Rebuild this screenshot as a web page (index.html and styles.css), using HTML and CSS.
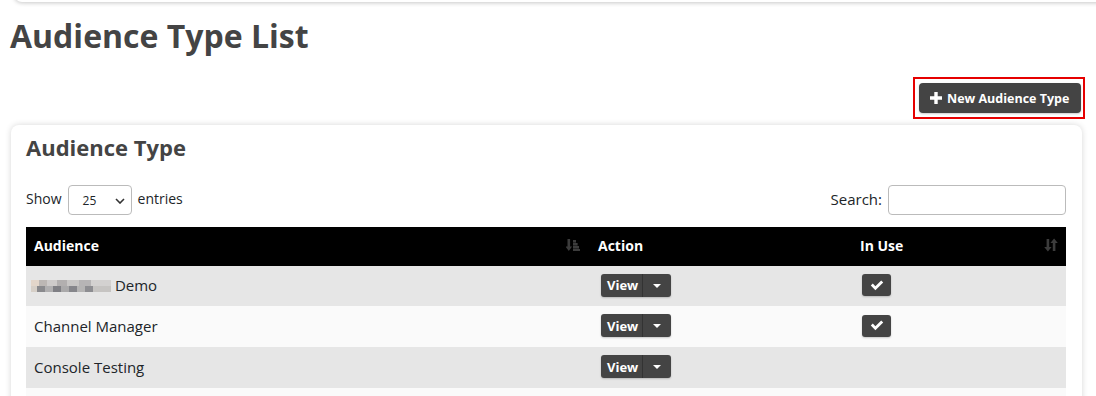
FILE: index.html
```html
<!DOCTYPE html>
<html lang="en">
<head>
<meta charset="UTF-8" />
<meta name="viewport" content="width=device-width, initial-scale=1" />
<title>Audience Type List</title>
<link rel="stylesheet" href="styles.css">
</head>
<body>
  <div class="top-card"></div>

  <div class="page">
    <h1>Audience Type List</h1>

    <div class="toolbar">
      <span class="highlight">
        <button class="btn btn-new" type="button">
          <svg class="plus" viewBox="0 0 12 12" width="12" height="12"><path d="M4.3 0h3.4v4.3H12v3.4H7.7V12H4.3V7.7H0V4.3h4.3z" fill="#fff"/></svg>
          New Audience Type
        </button>
      </span>
    </div>

    <div class="card">
      <h2>Audience Type</h2>

      <div class="table-controls">
        <label class="length">
          Show
          <span class="select">25
            <svg viewBox="0 0 10 6" width="10" height="6"><path d="M1 1l4 4 4-4" fill="none" stroke="#333" stroke-width="1.6"/></svg>
          </span>
          entries
        </label>
        <label class="search">
          Search:
          <span class="input"></span>
        </label>
      </div>

      <table class="list">
        <colgroup>
          <col class="col-audience">
          <col class="col-action">
          <col class="col-use">
        </colgroup>
        <thead>
          <tr>
            <th>
              <span class="th-inner">Audience
                <svg class="sort" viewBox="0 0 14 14" width="14" height="14">
                  <path d="M1.5 1h2.6v7.5h2L2.8 13 -0.5 8.5h2z" fill="#3c3c3c"/>
                  <rect x="7" y="2" width="3" height="2.6" fill="#3c3c3c"/>
                  <rect x="7" y="5" width="4.6" height="2.6" fill="#3c3c3c"/>
                  <rect x="7" y="8" width="6" height="2.6" fill="#3c3c3c"/>
                  <rect x="7" y="11" width="7" height="2" fill="#3c3c3c"/>
                </svg>
              </span>
            </th>
            <th>Action</th>
            <th>
              <span class="th-inner">In Use
                <svg class="sort" viewBox="0 0 14 14" width="14" height="14">
                  <path d="M2.6 1h2.6v8h2.4L3.9 13.5 0.2 9h2.4z" fill="#3c3c3c"/>
                  <path d="M8.8 13h2.6V5h2.4L10.1 0.5 6.4 5h2.4z" fill="#3c3c3c"/>
                </svg>
              </span>
            </th>
          </tr>
        </thead>
        <tbody>
          <tr>
            <td><span class="blurred"></span> Demo</td>
            <td>
              <span class="btn-group">
                <span class="btn-view">View</span><span class="btn-caret"></span>
              </span>
            </td>
            <td>
              <span class="btn-check">
                <svg viewBox="0 0 14 11" width="14" height="11"><path d="M0.8 5.6l2-2 2.6 2.6L11.2 0.4l2 2L5.4 10.2z" fill="#fff"/></svg>
              </span>
            </td>
          </tr>
          <tr>
            <td>Channel Manager</td>
            <td>
              <span class="btn-group">
                <span class="btn-view">View</span><span class="btn-caret"></span>
              </span>
            </td>
            <td>
              <span class="btn-check">
                <svg viewBox="0 0 14 11" width="14" height="11"><path d="M0.8 5.6l2-2 2.6 2.6L11.2 0.4l2 2L5.4 10.2z" fill="#fff"/></svg>
              </span>
            </td>
          </tr>
          <tr>
            <td>Console Testing</td>
            <td>
              <span class="btn-group">
                <span class="btn-view">View</span><span class="btn-caret"></span>
              </span>
            </td>
            <td></td>
          </tr>
          <tr>
            <td>&nbsp;</td>
            <td></td>
            <td></td>
          </tr>
        </tbody>
      </table>
    </div>
  </div>
</body>
</html>
```

FILE: styles.css
```css
* {
  box-sizing: border-box;
}

body {
  margin: 0;
  font-family: 'Open Sans', 'Noto Sans', sans-serif;
  font-size: 14px;
  color: #212529;
  background: #fff;
  overflow: hidden;
}

.top-card {
  height: 20px;
  margin: -18px -20px 0 14px;
  background: #fff;
  border-radius: 8px;
  box-shadow: 0 1px 4px rgba(0,0,0,0.22);
}

.page {
  padding: 0 14px 0 11px;
}

h1 {
  margin: 12px 0 0 -1px;
  font-size: 32px;
  line-height: 44px;
  font-weight: 700;
  color: #444;
}

.toolbar {
  display: flex;
  justify-content: flex-end;
  margin-top: 19px;
  margin-right: -3px;
}

.highlight {
  display: block;
  padding: 4px 2px 4px 4px;
  border: 2px solid #e60000;
}

.btn {
  font-family: inherit;
  border: none;
  cursor: pointer;
}

.btn-new {
  display: flex;
  align-items: center;
  gap: 5px;
  width: 162px;
  height: 30px;
  padding: 0 0 0 11px;
  background: #444;
  color: #fff;
  font-size: 12.5px;
  font-weight: 700;
  border-radius: 4px;
  box-shadow: 0 1px 2px rgba(0,0,0,0.2);
}

.card {
  margin-top: 6px;
  padding: 9px 16px 20px 15px;
  background: #fff;
  border-radius: 8px;
  box-shadow: 0 0 6px rgba(0,0,0,0.16);
}

h2 {
  margin: 0;
  font-size: 22px;
  line-height: 26px;
  font-weight: 700;
  color: #444;
}

.table-controls {
  display: flex;
  justify-content: space-between;
  align-items: center;
  margin-top: 25px;
  height: 30px;
}

.length,
.search {
  display: flex;
  align-items: center;
  gap: 6px;
  line-height: 20px;
}

.length {
  margin-top: -2px;
}

.search {
  font-size: 15px;
  margin-top: -2px;
}

.select {
  display: flex;
  align-items: center;
  justify-content: space-between;
  width: 64px;
  height: 30px;
  margin-top: 2px;
  padding: 2px 6px 0 14px;
  border: 1px solid #bbb;
  border-radius: 4px;
  font-size: 12px;
}

.input {
  display: block;
  width: 178px;
  height: 30px;
  margin-top: 2px;
  border: 1px solid #bbb;
  border-radius: 4px;
}

.list {
  width: 100%;
  margin-top: 12px;
  border-collapse: collapse;
  table-layout: fixed;
}

.col-audience { width: 564px; }
.col-action { width: 262px; }
.col-use { width: 214px; }

.list th {
  height: 39px;
  padding: 0 8px 3px;
  background: #000;
  color: #fff;
  font-size: 14px;
  font-weight: 700;
  text-align: left;
}

.th-inner {
  display: flex;
  align-items: center;
  justify-content: space-between;
}

.list th:first-child .th-inner {
  padding-right: 2px;
}

.list td {
  height: 41px;
  padding: 0 8px 2px;
  font-size: 15px;
  vertical-align: middle;
}

.list tbody tr:nth-child(odd) td {
  background: #e6e6e6;
}

.list tbody tr:nth-child(even) td {
  background: #fafafa;
}

.list tbody tr:first-child td {
  height: 40px;
}

.blurred {
  display: inline-block;
  width: 80px;
  height: 12px;
  margin-left: -3px;
  vertical-align: -1px;
  background:
    linear-gradient(to right, #e3d6ca 0 8px, #bcb7b4 8px 16px, #cdcac9 16px 26px, #b2afaf 26px 36px, #c8c6c5 36px 48px, #b6b4b5 48px 60px, #d3d1d0 60px 80px) top / 100% 6px no-repeat,
    linear-gradient(to right, #d6cfc7 0 6px, #8a8a8d 6px 14px, #b0afb0 14px 22px, #7f7f84 22px 30px, #aaa9aa 30px 38px, #86868b 38px 46px, #b5b4b4 46px 54px, #8d8d91 54px 62px, #c6c4c2 62px 80px) bottom / 100% 6px no-repeat;
}

.btn-group {
  display: inline-flex;
  height: 23px;
  margin-left: 3px;
  border-radius: 3px;
  overflow: hidden;
  background: #444;
  color: #fff;
  font-size: 13px;
  font-weight: 700;
  vertical-align: middle;
  box-shadow: 0 1px 2px rgba(0,0,0,0.2);
}

.btn-view {
  display: flex;
  align-items: center;
  padding: 0 6px;
  width: 42px;
  border-right: 1px solid #333;
}

.btn-caret {
  position: relative;
  width: 28px;
}

.btn-caret::after {
  content: "";
  position: absolute;
  left: 10px;
  top: 10px;
  border-left: 4px solid transparent;
  border-right: 4px solid transparent;
  border-top: 4px solid #fff;
}

.btn-check {
  display: inline-flex;
  align-items: center;
  justify-content: center;
  width: 29px;
  height: 22px;
  margin-left: 2px;
  border-radius: 3px;
  background: #444;
  vertical-align: middle;
  box-shadow: 0 1px 2px rgba(0,0,0,0.2);
}
```
